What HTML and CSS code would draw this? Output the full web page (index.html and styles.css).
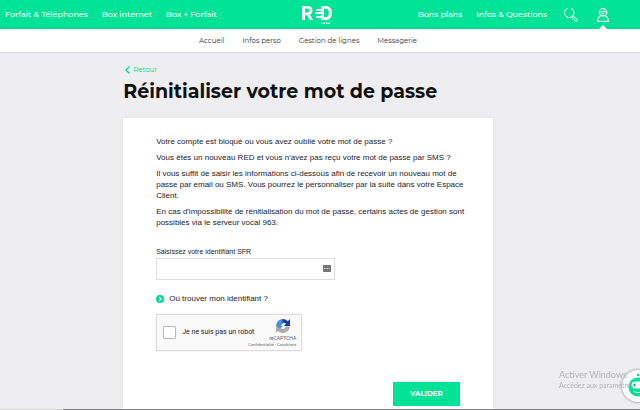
FILE: index.html
```html
<!DOCTYPE html>
<html lang="fr">
<head>
<meta charset="utf-8">
<meta name="viewport" content="width=device-width, initial-scale=1">
<title>Réinitialiser votre mot de passe</title>
<link rel="stylesheet" href="styles.css">
</head>
<body>
<header class="topbar">
  <nav class="topnav" aria-label="Offres">
    <a href="#">Forfait &amp; Téléphones</a>
    <a href="#">Box internet</a>
    <a href="#">Box + Forfait</a>
  </nav>
  <a class="logo" href="#" aria-label="RED">
    <svg width="30" height="18" viewBox="0 0 30 18" fill="#fff">
      <path fill-rule="evenodd" d="M0 0h5.500C9 0 10.500 2 10.500 4.600c0 2-.9 3.300-2.400 4L11 14H7.600L5.200 9.200H3V14H0zM3 2.600v4h2.300c1.400 0 2.100-.7 2.100-2s-.7-2-2.100-2z"/>
      <path d="M14 3h6v2h-6zM13 6h6v2h-6zM14 10h6v2h-6z"/>
      <path fill-rule="evenodd" d="M19 0h4c4.500 0 7 2.600 7 7s-2.500 7-7 7h-4zM22 2.700v8.600h1.200c2.400 0 3.700-1.400 3.700-4.300s-1.300-4.300-3.700-4.300z"/>
      <path d="M19 16.500h1.500V18H19zM21.500 16.500H23V18h-1.500zM24 16.500h1.500V18H24zM26.500 16.500H28V18h-1.500z"/>
    </svg>
  </a>
  <nav class="topnav topnav-end" aria-label="Services">
    <a href="#">Bons plans</a>
    <a href="#">Infos &amp; Questions</a>
    <a class="icon-link" href="#" aria-label="Rechercher">
      <svg width="16" height="16" viewBox="0 0 16 16" fill="none" stroke="#fff">
        <path d="M4.500 1.300A4.800 4.800 0 1 0 8 1.300"/>
        <path d="M9.500 9.500l1.200-.2 4 3.900-1.500 1.500-4-4z"/>
      </svg>
    </a>
    <a class="icon-link current" href="#" aria-label="Espace client">
      <svg width="12" height="16" viewBox="0 0 12 16" fill="none" stroke="#fff" stroke-width="1.200">
        <circle cx="6" cy="5.200" r="3.700"/>
        <path d="M3.500 5c1.500.2 2.500-.3 3-1.200.5.800 1 1.100 2 1.200M4.800 6.500h2.400"/>
        <path d="M3.800 8.700C1.500 9.800.6 11.500.6 14.400h10.800c0-2.900-.9-4.600-3.200-5.700"/>
      </svg>
    </a>
  </nav>
</header>
<nav class="subnav" aria-label="Espace client">
  <a href="#">Accueil</a>
  <a href="#">Infos perso</a>
  <a href="#">Gestion de lignes</a>
  <a href="#">Messagerie</a>
</nav>
<main class="page">
  <div class="content">
    <a class="back" href="#">
      <svg width="5" height="8" viewBox="0 0 5 8" fill="none" stroke="currentColor" stroke-width="1.200"><path d="M4.500.5L1 4l3.500 3.500"/></svg>
      Retour
    </a>
    <h1>Réinitialiser votre mot de passe</h1>
    <form class="card">
      <div class="intro">
        <p>Votre compte est bloqué ou vous avez oublié votre mot de passe ?</p>
        <p>Vous êtes un nouveau RED et vous n'avez pas reçu votre mot de passe par SMS ?</p>
        <p>Il vous suffit de saisir les informations ci-dessous afin de recevoir un nouveau mot de<br>passe par email ou SMS. Vous pourrez le personnaliser par la suite dans votre Espace<br>Client.</p>
        <p>En cas d'impossibilité de rénitialisation du mot de passe, certains actes de gestion sont<br>possibles via le serveur vocal 963.</p>
      </div>
      <label class="field-label" for="login">Saisissez votre identifiant SFR</label>
      <div class="field">
        <input id="login" type="text">
        <svg class="field-icon" width="8" height="7" viewBox="0 0 8 7"><rect width="8" height="7" rx="1" fill="#737373"/><path d="M1 3.500h6" stroke="#ddd" stroke-dasharray="1 .5"/></svg>
      </div>
      <a class="help" href="#">
        <svg width="8" height="8" viewBox="0 0 8 8" fill="none"><circle cx="4" cy="4" r="4" fill="#00d88f"/><path d="M3.200 2l2 2-2 2" stroke="#fff" stroke-width="1.200"/></svg>
        Où trouver mon identifiant ?
      </a>
      <div class="captcha">
        <input id="robot" type="checkbox">
        <label for="robot">Je ne suis pas un robot</label>
        <div class="captcha-brand">
          <svg width="16" height="16" viewBox="0 0 16 16">
            <path d="M1 8a7 7 0 0 1 7-7v4.500a2.700 2.700 0 0 0-2 2.500H8L4.500 11 1 8z" fill="#4a8df0"/>
            <path d="M7.500 1a7 7 0 0 1 5.300 2.200L15 1v7H9l2-2.200A3.500 3.500 0 0 0 7.500 5z" fill="#1c3aa9"/>
            <path d="M1 8l3.500 3 1.100-1.500C6.800 11.500 10 11.500 11 8.500h3.800A7 7 0 0 1 3 13L.8 14.500z" fill="#ababab"/>
          </svg>
          <span class="captcha-name">reCAPTCHA</span>
          <span class="captcha-legal"><a href="#">Confidentialité</a> - <a href="#">Conditions</a></span>
        </div>
      </div>
      <button class="submit" type="submit">VALIDER</button>
    </form>
  </div>
</main>
<button class="chat" type="button" aria-label="Assistant">
  <svg width="32" height="32" viewBox="0 0 32 32" fill="none">
    <circle cx="16" cy="5" r="1.200" fill="#00e08f"/>
    <circle cx="16" cy="17" r="9.500" fill="#00e096"/>
    <rect x="9.500" y="11.500" width="13" height="7" rx="3.500" fill="#fff"/>
    <path d="M11 15h3M12.500 13.500v3M18 15h3M19.500 13.500v3" stroke="#00b87b"/>
    <path d="M11.500 21c2 2 7 2 9 0" stroke="#fff"/>
  </svg>
</button>
<aside class="watermark">
  <strong>Activer Windows</strong>
  <span>Accédez aux paramètres</span>
</aside>
<div class="taskbar"></div>
</body>
</html>
```
FILE: styles.css
```css
* {
  box-sizing: border-box;
}

body {
  display: flex;
  flex-direction: column;
  min-height: 100vh;
  margin: 0;
  overflow-x: hidden;
  background: #eeeef0;
  color: #22222c;
  font: 8px/11px "Liberation Sans", Arial, sans-serif;
}

a {
  color: inherit;
  text-decoration: none;
}

svg {
  display: block;
  flex: none;
}

.topbar {
  display: grid;
  grid-template-columns: 1fr auto 1fr;
  align-items: center;
  height: 29px;
  padding-right: 6px;
  background: linear-gradient(#00e396 25px, #00d68d);
}

.topnav {
  display: flex;
  align-items: center;
  gap: 14px;
  padding-left: 5px;
  color: #fff;
  font: 500 8px/11px Montserrat, Inter, sans-serif;
  white-space: nowrap;
}

.topnav-end {
  justify-content: flex-end;
  padding-right: 25px;
}

.icon-link {
  display: flex;
  align-items: center;
  height: 29px;
  margin-left: 2px;
}

.icon-link.current {
  position: relative;
  margin-left: 4px;
}

.icon-link.current::after {
  content: "";
  position: absolute;
  bottom: 0;
  left: 2px;
  border: 4px solid transparent;
  border-top: 0;
  border-bottom-color: #fff;
}

.subnav {
  display: flex;
  justify-content: center;
  align-items: center;
  gap: 18px;
  height: 23px;
  padding-right: 24px;
  background: #fff;
  box-shadow: 0 1px 2px #d8d8da;
  color: #33333b;
  font: 7px/10px Montserrat, Inter, sans-serif;
}

.page {
  display: flex;
  flex: 1;
  justify-content: center;
  padding: 13px 24px 0 0;
}

.content {
  display: flex;
  flex-direction: column;
  width: 60%;
  min-width: 350px;
}

.back {
  display: flex;
  align-items: center;
  gap: 3px;
  padding-left: 2px;
  color: #00d68d;
  font: 7px/10px Montserrat, Inter, sans-serif;
}

h1 {
  margin: 5px 0 14px;
  color: #111;
  font: 700 19px/24px Montserrat, Inter, sans-serif;
  white-space: nowrap;
}

.card {
  display: flex;
  flex: 1;
  flex-direction: column;
  align-items: flex-start;
  padding: 18px 33px 3px;
  background: #fff;
  box-shadow: 0 0 3px #e0e0e2;
}

.intro {
  white-space: nowrap;
}

p {
  margin: 0 0 5px;
}

.field-label {
  margin-top: 13px;
  font-size: 7px;
}

.field {
  position: relative;
  width: 59%;
  margin-top: 1px;
}

.field input {
  display: block;
  width: 100%;
  height: 22px;
  padding: 0 20px 0 6px;
  border: 1px solid #dedede;
  background: #fff;
  font: inherit;
}

.field-icon {
  position: absolute;
  top: 7px;
  right: 4px;
}

.help {
  display: flex;
  align-items: center;
  gap: 5px;
  margin-top: 13px;
}

.captcha {
  display: flex;
  align-items: center;
  width: 146px;
  height: 37px;
  margin-top: 10px;
  padding: 0 5px 0 6px;
  border: 1px solid #dcdcdc;
  border-radius: 1px;
  background: #f9f9f9;
  box-shadow: 0 0 2px #e0e0e0;
  font: 7px/9px Roboto, sans-serif;
  white-space: nowrap;
}

.captcha > input {
  flex: none;
  width: 13px;
  height: 13px;
  margin: 0 6px 0 0;
  appearance: none;
  border: 1px solid #b9b9b9;
  border-radius: 1px;
  background: #fff;
}

.captcha-brand {
  display: flex;
  flex: 1;
  flex-direction: column;
  align-items: flex-end;
  width: 0;
  color: #666;
}

.captcha-brand svg {
  margin-right: 5px;
}

.captcha-name {
  margin-top: 1px;
  font-size: 5px;
  line-height: 7px;
}

.captcha-legal {
  font-size: 4px;
  line-height: 5px;
}

.submit {
  align-self: flex-end;
  width: 67px;
  height: 24px;
  margin-top: auto;
  border: 0;
  background: #00e396;
  color: #fff;
  font: 700 7px/10px Montserrat, Inter, sans-serif;
}

.watermark {
  position: fixed;
  right: 0;
  bottom: 20px;
  width: 81px;
  color: #b3b3b6;
  font: 7px/10px Lato, sans-serif;
  white-space: nowrap;
  pointer-events: none;
}

.watermark strong {
  display: block;
  font-size: 9px;
  font-weight: 400;
}

.chat {
  position: fixed;
  right: -14px;
  bottom: 8px;
  width: 32px;
  height: 32px;
  padding: 0;
  border: 0;
  border-radius: 50%;
  background: #fff;
  box-shadow: 0 0 3px #777;
}

.taskbar {
  height: 1px;
  background: linear-gradient(90deg, #cfcfcf 63px, #858587 63px);
}
```
